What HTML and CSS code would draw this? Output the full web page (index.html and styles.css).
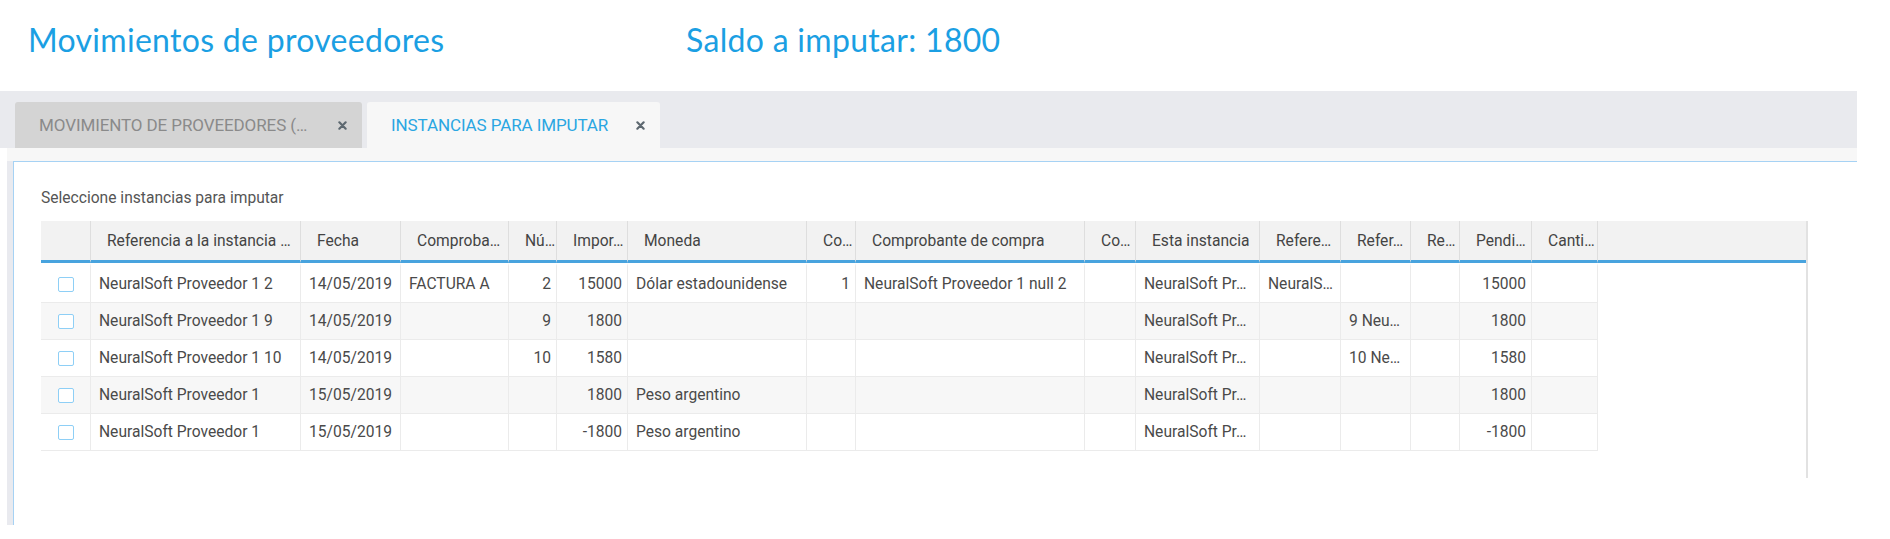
FILE: index.html
```html
<!DOCTYPE html>
<html lang="es">
<head>
<meta charset="utf-8">
<title>Movimientos de proveedores</title>
<link rel="stylesheet" href="styles.css">
</head>
<body>
<header class="page-head">
  <h1 class="title">Movimientos de proveedores</h1>
  <div class="saldo">Saldo a imputar: 1800</div>
</header>
<section class="workspace">
  <nav class="tabs">
    <div class="tab tab-inactive">
      <span class="tab-label">MOVIMIENTO DE PROVEEDORES (…</span>
      <svg class="tab-close" viewBox="0 0 10 10" width="9" height="9"><path d="M1.5 1.5 L8.5 8.5 M8.5 1.5 L1.5 8.5" stroke="#5d6870" stroke-width="2.4" stroke-linecap="round"/></svg>
    </div>
    <div class="tab tab-active">
      <span class="tab-label">INSTANCIAS PARA IMPUTAR</span>
      <svg class="tab-close" viewBox="0 0 10 10" width="9" height="9"><path d="M1.5 1.5 L8.5 8.5 M8.5 1.5 L1.5 8.5" stroke="#5d6870" stroke-width="2.4" stroke-linecap="round"/></svg>
    </div>
  </nav>
  <div class="panel">
    <div class="panel-edge">
      <div class="panel-body">
        <p class="hint">Seleccione instancias para imputar</p>
        <div class="grid">
          <table class="data">
            <colgroup>
              <col class="w-chk"><col class="w-ref"><col class="w-fecha"><col class="w-comp"><col class="w-nu"><col class="w-imp"><col class="w-mon"><col class="w-co"><col class="w-cc"><col class="w-co2"><col class="w-esta"><col class="w-refe"><col class="w-refer"><col class="w-re"><col class="w-pend"><col class="w-cant"><col>
            </colgroup>
            <thead>
              <tr>
                <th></th>
                <th>Referencia a la instancia …</th>
                <th>Fecha</th>
                <th>Comproba…</th>
                <th>Nú…</th>
                <th>Impor…</th>
                <th>Moneda</th>
                <th>Co…</th>
                <th>Comprobante de compra</th>
                <th>Co…</th>
                <th>Esta instancia</th>
                <th>Refere…</th>
                <th>Refer…</th>
                <th>Re…</th>
                <th>Pendi…</th>
                <th>Canti…</th>
                <th class="fill"></th>
              </tr>
            </thead>
            <tbody>
              <tr>
                <td class="c"><span class="chk"></span></td>
                <td>NeuralSoft Proveedor 1 2</td>
                <td>14/05/2019</td>
                <td>FACTURA A</td>
                <td class="n">2</td>
                <td class="n">15000</td>
                <td>Dólar estadounidense</td>
                <td class="n">1</td>
                <td>NeuralSoft Proveedor 1 null 2</td>
                <td></td>
                <td>NeuralSoft Pr…</td>
                <td>NeuralS…</td>
                <td></td>
                <td></td>
                <td class="n">15000</td>
                <td></td>
                <td class="fill"></td>
              </tr>
              <tr>
                <td class="c"><span class="chk"></span></td>
                <td>NeuralSoft Proveedor 1 9</td>
                <td>14/05/2019</td>
                <td></td>
                <td class="n">9</td>
                <td class="n">1800</td>
                <td></td>
                <td></td>
                <td></td>
                <td></td>
                <td>NeuralSoft Pr…</td>
                <td></td>
                <td>9 Neu…</td>
                <td></td>
                <td class="n">1800</td>
                <td></td>
                <td class="fill"></td>
              </tr>
              <tr>
                <td class="c"><span class="chk"></span></td>
                <td>NeuralSoft Proveedor 1 10</td>
                <td>14/05/2019</td>
                <td></td>
                <td class="n">10</td>
                <td class="n">1580</td>
                <td></td>
                <td></td>
                <td></td>
                <td></td>
                <td>NeuralSoft Pr…</td>
                <td></td>
                <td>10 Ne…</td>
                <td></td>
                <td class="n">1580</td>
                <td></td>
                <td class="fill"></td>
              </tr>
              <tr>
                <td class="c"><span class="chk"></span></td>
                <td>NeuralSoft Proveedor 1</td>
                <td>15/05/2019</td>
                <td></td>
                <td></td>
                <td class="n">1800</td>
                <td>Peso argentino</td>
                <td></td>
                <td></td>
                <td></td>
                <td>NeuralSoft Pr…</td>
                <td></td>
                <td></td>
                <td></td>
                <td class="n">1800</td>
                <td></td>
                <td class="fill"></td>
              </tr>
              <tr>
                <td class="c"><span class="chk"></span></td>
                <td>NeuralSoft Proveedor 1</td>
                <td>15/05/2019</td>
                <td></td>
                <td></td>
                <td class="n">-1800</td>
                <td>Peso argentino</td>
                <td></td>
                <td></td>
                <td></td>
                <td>NeuralSoft Pr…</td>
                <td></td>
                <td></td>
                <td></td>
                <td class="n">-1800</td>
                <td></td>
                <td class="fill"></td>
              </tr>
            </tbody>
          </table>
        </div>
      </div>
    </div>
  </div>
</section>
</body>
</html>
```
FILE: styles.css
```css
* { box-sizing: border-box; }

html, body {
  margin: 0;
  padding: 0;
  background: #ffffff;
}

body {
  font-family: Roboto, "Liberation Sans", sans-serif;
  color: #4a4a4a;
  width: 1890px;
  height: 539px;
  overflow: hidden;
}

/* ---------- page header ---------- */
.page-head {
  display: flex;
  align-items: flex-start;
  height: 91px;
  padding: 21px 0 0 28px;
}

.title,
.saldo {
  margin: 0;
  font-family: Lato, "Open Sans", sans-serif;
  font-weight: 400;
  font-size: 32px;
  line-height: 38px;
  letter-spacing: 0.3px;
  color: #1b9fe3;
}

.title {
  flex: 0 0 658px;
}

/* ---------- workspace / tabs ---------- */
.workspace {
  width: 1857px;
}

.tabs {
  display: flex;
  align-items: flex-end;
  gap: 5px;
  height: 57px;
  padding-left: 15px;
  background: #e9eaee;
}

.tab {
  display: flex;
  align-items: center;
  justify-content: space-between;
  height: 46px;
  padding: 0 15px 0 24px;
  border-radius: 3px 3px 0 0;
  font-size: 17px;
  letter-spacing: -0.1px;
  white-space: nowrap;
}

.tab-inactive {
  width: 347px;
  background: #d4d4d4;
  color: #8a8a8a;
}

.tab-active {
  width: 293px;
  background: #f7f7f7;
  color: #2aa6e2;
}

.tab-close {
  flex: none;
  display: block;
}

/* ---------- panel ---------- */
.panel {
  margin-left: 7px;
  padding-top: 13px;
  background: #f7f7f7;
}

.panel-edge {
  border-left: 6px solid #e9eaef;
  background: #ffffff;
}

.panel-body {
  height: 364px;
  border-top: 1px solid #a6d2f4;
  border-left: 1px solid #a6d2f4;
  background: #ffffff;
  padding: 27px 0 0 27px;
}

.hint {
  margin: 0 0 13px;
  font-size: 15.6px;
  line-height: 19px;
  color: #555555;
}

/* ---------- grid ---------- */
.grid {
  width: 1767px;
  height: 257px;
  border-right: 2px solid #e2e2e2;
}

.data {
  width: 1765px;
  table-layout: fixed;
  border-collapse: separate;
  border-spacing: 0;
  font-size: 15.6px;
}

.w-chk { width: 50px; }
.w-ref { width: 210px; }
.w-fecha { width: 100px; }
.w-comp { width: 108px; }
.w-nu { width: 48px; }
.w-imp { width: 71px; }
.w-mon { width: 179px; }
.w-co { width: 49px; }
.w-cc { width: 229px; }
.w-co2 { width: 51px; }
.w-esta { width: 124px; }
.w-refe { width: 81px; }
.w-refer { width: 70px; }
.w-re { width: 49px; }
.w-pend { width: 72px; }
.w-cant { width: 66px; }

.data th {
  height: 42px;
  padding: 0 4px 0 16px;
  background: #f2f2f2;
  border-right: 1px solid #dedede;
  border-bottom: 3px solid #48a3de;
  font-weight: 400;
  color: #444444;
  text-align: left;
  white-space: nowrap;
  overflow: hidden;
}

.data th.fill {
  border-right: none;
}

.data td {
  height: 37px;
  padding: 0 5px 0 8px;
  border-right: 1px solid #ebebeb;
  border-bottom: 1px solid #ebebeb;
  color: #4a4a4a;
  white-space: nowrap;
  overflow: hidden;
  background: #ffffff;
}

.data tbody tr:first-child td {
  height: 40px;
  border-top: 3px solid #ffffff;
}

.data tbody tr:nth-child(even) td {
  background: #f7f7f7;
}

.data td.fill,
.data tbody tr:nth-child(even) td.fill {
  border: none;
  background: #ffffff;
}

.data tbody tr:first-child td.fill {
  border-top: 3px solid #ffffff;
}

.data td.n {
  text-align: right;
}

.data td.c {
  text-align: center;
  padding: 0;
}

.chk {
  display: inline-block;
  vertical-align: middle;
  width: 16px;
  height: 15px;
  border: 1px solid #8ecff6;
  border-radius: 2px;
  background: #ffffff;
}
```
